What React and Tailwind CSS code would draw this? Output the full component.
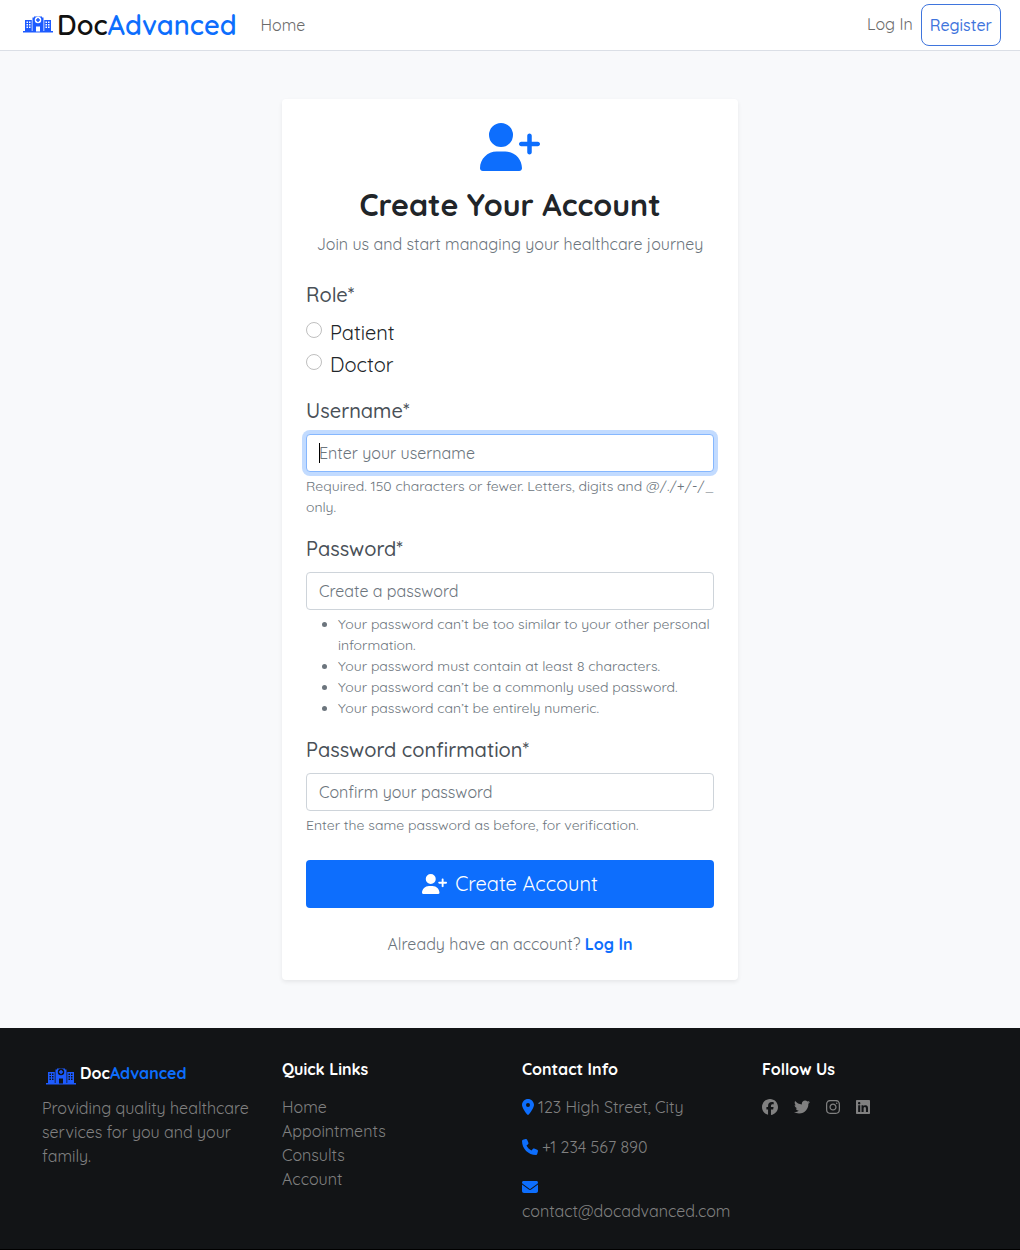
import React from "react";
import {
  FaUserPlus, FaLocationDot, FaPhone, FaEnvelope, FaFacebook, FaTwitter, FaInstagram, FaLinkedin,
} from "react-icons/fa6";

function Hospital({ className }) {
  return (
    <svg viewBox="0 0 60 34" className={className} fill="#1d5bff">
      <path
        fillRule="evenodd"
        d="M0 30h4V8h13.500v22H19V3h3V1h16v2h3v27h1.500V8H56v22h4v3H0zM7 11v3h3v-3zM12 11v3h3v-3zM7 16v3h3v-3zM12 16v3h3v-3zM7 21v3h3v-3zM12 21v3h3v-3zM45 11v3h3v-3zM50 11v3h3v-3zM45 16v3h3v-3zM50 16v3h3v-3zM45 21v3h3v-3zM50 21v3h3v-3zM26 21v10h8V21zM30 1.500a6.500 6.500 0 1 0 0 13a6.500 6.500 0 1 0 0-13zM28.500 4h3v2.500h2.500v3h-2.500v2.500h-3v-2.500h-2.500v-3h2.500z"
      />
    </svg>
  );
}

function Label({ children }) {
  return <div className="mb-2 text-[20px] leading-[30px] font-medium text-[#495057]">{children}</div>;
}

function Radio({ children }) {
  return (
    <label className="mb-[2px] flex h-[30px] text-[20px] leading-[30px] text-[#212529]">
      <span className="mt-1 mr-2 size-4 shrink-0 rounded-full border border-[#bfbfbf] bg-white" />
      {children}
    </label>
  );
}

const inputBase = "flex h-[38px] items-center rounded border bg-white px-3 text-[16px] leading-6 text-[#6c757d]";
const help = "mt-1 text-[14px] leading-[21px] text-[#6c757d]";

export default function App() {
  return (
    <div className="min-h-[1250px] bg-black font-['Quicksand','Lato',sans-serif] text-[16px] leading-6 font-normal">
      <nav className="flex h-[51px] items-center border-b border-[#dbdfe6] bg-white pr-[19px] pl-[23px]">
        <Hospital className="-mt-px mr-1 h-[17px] w-[30px]" />
        <div className="text-[27.2px] leading-[42px] font-semibold text-[#111]">
          Doc<span className="text-[#0d6efd]">Advanced</span>
        </div>
        <a className="ml-6 text-[#6b6b6b]">Home</a>
        <div className="ml-auto flex items-center gap-2">
          <a className="-mt-0.5 text-[#6b6b6b]">Log In</a>
          <a className="rounded-[8px] border border-[#3f75dd] px-2 py-2 font-medium text-[#3f75dd]">Register</a>
        </div>
      </nav>

      <main className="flex h-[977px] justify-center bg-[#f8f9fb] pt-12">
        <section className="h-[881px] w-[456px] rounded bg-white p-6 shadow-[0_2px_4px_rgba(0,0,0,0.075)]">
          <div className="flex flex-col items-center">
            <FaUserPlus className="h-12 w-[60px] text-[#0d6efd]" />
            <h1 className="mt-4 mb-2 text-[30.4px] leading-[36.5px] font-bold text-[#212529]">Create Your Account</h1>
            <p className="mb-[24.500px] text-[#6c757d]">Join us and start managing your healthcare journey</p>
          </div>

          <div className="mb-4">
            <Label>Role*</Label>
            <Radio>Patient</Radio>
            <Radio>Doctor</Radio>
          </div>

          <div className="mb-4">
            <Label>Username*</Label>
            <div className={`${inputBase} border-[#86b7fe] ring-4 ring-[#c2dbff]`}>
              <span className="relative">
                <span className="absolute top-[2px] left-0 h-5 w-px bg-black" />
                Enter your username
              </span>
            </div>
            <div className={help}>Required. 150 characters or fewer. Letters, digits and @/./+/-/_ only.</div>
          </div>

          <div className="mb-4">
            <Label>Password*</Label>
            <div className={`${inputBase} border-[#ced4da]`}>Create a password</div>
            <ul className={`${help} list-disc pl-8`}>
              <li>Your password can’t be too similar to your other personal information.</li>
              <li>Your password must contain at least 8 characters.</li>
              <li>Your password can’t be a commonly used password.</li>
              <li>Your password can’t be entirely numeric.</li>
            </ul>
          </div>

          <div className="mb-6">
            <Label>Password confirmation*</Label>
            <div className={`${inputBase} border-[#ced4da]`}>Confirm your password</div>
            <div className={help}>Enter the same password as before, for verification.</div>
          </div>

          <button className="flex h-12 w-full items-center justify-center gap-2 rounded bg-[#0d6efd] text-[20px] leading-[30px] text-white">
            <FaUserPlus className="h-[20px] w-[25px]" />
            Create Account
          </button>

          <p className="mt-6 text-center text-[#6c757d]">
            Already have an account? <a className="font-bold text-[#0d6efd]">Log In</a>
          </p>
        </section>
      </main>

      <footer className="h-[221px] bg-[#121416] px-[30px] pt-8 text-[#808080]">
        <div className="grid grid-cols-4">
          <div className="px-3">
            <div className="flex items-center pt-px pl-1">
              <Hospital className="mt-[6px] mr-1 h-[17px] w-[30px]" />
              <div className="font-bold text-white">
                Doc<span className="text-[#0d6efd]">Advanced</span>
              </div>
            </div>
            <p className="mt-[11px]">Providing quality healthcare services for you and your family.</p>
          </div>
          <div className="px-3">
            <h2 className="mb-4 leading-[19px] font-bold text-white">Quick Links</h2>
            <ul>
              <li>Home</li>
              <li>Appointments</li>
              <li>Consults</li>
              <li>Account</li>
            </ul>
          </div>
          <div className="px-3">
            <h2 className="mb-4 leading-[19px] font-bold text-white">Contact Info</h2>
            <p className="mb-4 flex items-center gap-1"><FaLocationDot className="h-4 w-3 text-[#0d6efd]" />123 High Street, City</p>
            <p className="mb-4 flex items-center gap-1"><FaPhone className="size-4 text-[#0d6efd]" />+1 234 567 890</p>
            <div className="flex h-6 items-center"><FaEnvelope className="size-4 text-[#0d6efd]" /></div>
            <p>contact@docadvanced.com</p>
          </div>
          <div className="px-3">
            <h2 className="mb-4 leading-[19px] font-bold text-white">Follow Us</h2>
            <div className="flex h-6 items-center gap-4">
              <FaFacebook className="size-4" />
              <FaTwitter className="size-4" />
              <FaInstagram className="h-4 w-[14px]" />
              <FaLinkedin className="h-4 w-[14px]" />
            </div>
          </div>
        </div>
      </footer>
    </div>
  );
}
